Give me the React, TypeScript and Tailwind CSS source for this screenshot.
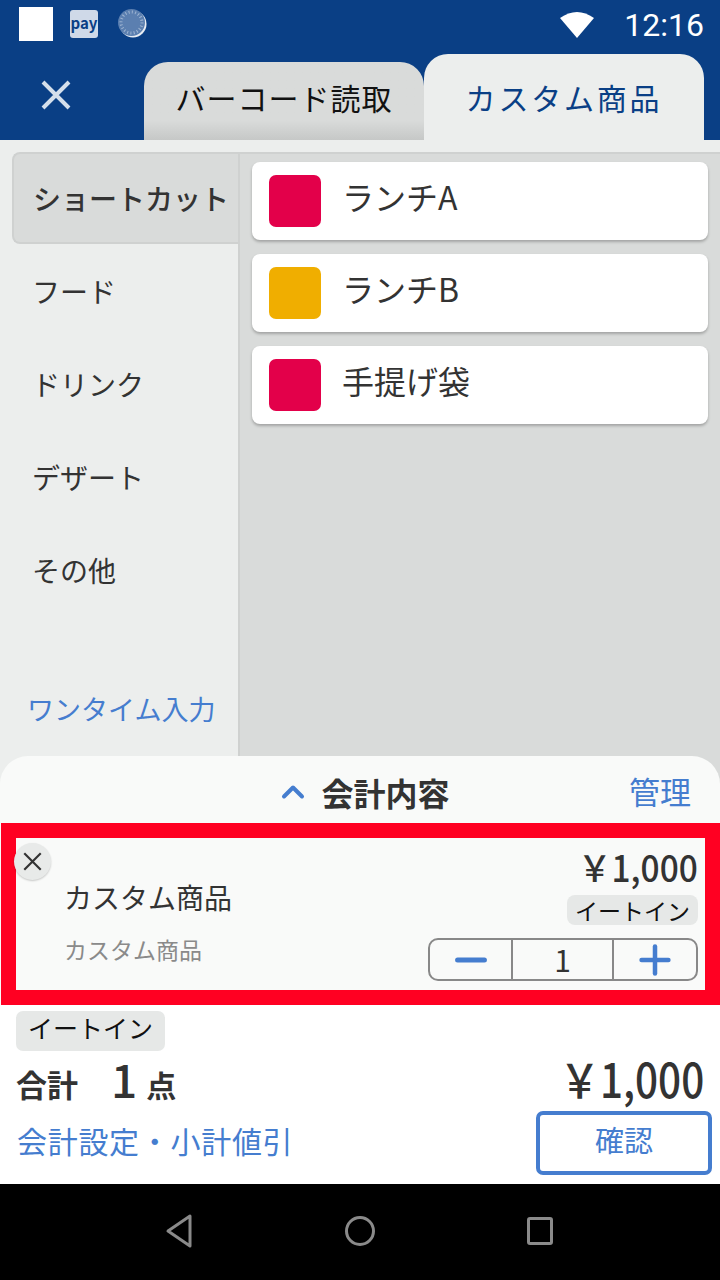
import React from "react";
import { ChevronUp, Minus, Plus } from "lucide-react";

const font = { fontFamily: '"Noto Sans CJK JP", "Noto Sans", sans-serif' };

const categories = ["フード", "ドリンク", "デザート", "その他"];

const shortcuts = [
  { name: "ランチA", color: "bg-[#e3004a]" },
  { name: "ランチB", color: "bg-[#f0ae00]" },
  { name: "手提げ袋", color: "bg-[#e3004a]" },
];

function Cross({ size, width, color }: { size: number; width: number; color: string }) {
  return (
    <svg width={size} height={size} viewBox="0 0 30 30" fill="none" stroke={color} strokeWidth={width}>
      <path d="M2 2 L28 28 M28 2 L2 28" />
    </svg>
  );
}

function StatusBar() {
  return (
    <div className="h-[54px] flex items-center pl-[19px] pr-[16px] text-white">
      <div className="w-[34px] h-[34px] bg-white -mt-[7px]" />
      <div className="ml-[17px] w-[28px] h-[28px] -mt-[7px] rounded-[3px] bg-[#cfd9e8] text-[#0a3f85] text-[15px] font-bold leading-[26px] text-center">
        pay
      </div>
      <svg className="ml-[20px] -mt-[7px]" width="30" height="30" viewBox="0 0 30 30">
        <circle cx="15" cy="15" r="13.5" fill="#fff" opacity="0.9" />
        <circle cx="13.5" cy="13.5" r="13.5" fill="#5b7fb0" />
        <circle cx="13.5" cy="13.5" r="10.5" fill="none" stroke="#9fb5d2" strokeWidth="3" strokeDasharray="1 2.3" />
      </svg>
      <svg className="ml-auto -mt-[4px]" width="36" height="28" viewBox="0 0 36 28">
        <path d="M18 27 L1 7 Q18 -5 35 7 Z" fill="#fff" />
      </svg>
      <span className="ml-[29px] text-[32px] leading-none -mt-[4px]" style={{ fontFamily: "Roboto, sans-serif" }}>
        12:16
      </span>
    </div>
  );
}

function Header() {
  return (
    <div className="h-[86px] flex items-end pr-[16px]">
      <div className="w-[144px] h-full flex items-center pl-[41px] pb-[5px]">
        <Cross size={30} width={4} color="#d5dfeb" />
      </div>
      <div className="w-[280px] h-[78px] rounded-t-[24px] bg-gradient-to-b from-[#d9dbda] from-[75%] to-[#c6c8c7] flex items-center justify-center text-[30px] text-[#111] pb-[8px] tracking-[1px]">
        バーコード読取
      </div>
      <div className="w-[280px] h-[86px] rounded-t-[24px] bg-[#eceeed] flex items-center justify-center text-[30px] text-[#0a3f85] tracking-[2.8px]">
        カスタム商品
      </div>
    </div>
  );
}

function Sidebar() {
  return (
    <div className="w-[238px] bg-[#eceeed] pt-[12px] flex flex-col">
      <div className="ml-[12px] h-[92px] rounded-l-[8px] border-2 border-r-0 border-[#cfd1d0] bg-[#d9dbda] flex items-center pl-[19px] text-[28px] font-medium text-[#333] whitespace-nowrap">
        ショートカット
      </div>
      {categories.map((c) => (
        <div key={c} className="h-[93px] flex items-center pl-[32px] text-[28px] text-[#333]">
          {c}
        </div>
      ))}
      {/* the sheet covers the last 28px of this column */}
      <div className="mt-auto pb-[62px] pl-[27px] text-[27px] text-[#457dcf] leading-none whitespace-nowrap">
        ワンタイム入力
      </div>
    </div>
  );
}

function ShortcutList() {
  return (
    <div className="flex-1 bg-[#d9dbda] border-t-2 border-l-2 border-[#cfd1d0] pt-[8px] pl-[12px] pr-[12px] flex flex-col gap-[14px]">
      {shortcuts.map((s) => (
        <div
          key={s.name}
          className="h-[78px] rounded-[8px] bg-white shadow-[0_2px_3px_rgba(0,0,0,0.25)] flex items-center pl-[17px] text-[32px] text-[#333]"
        >
          <div className={`w-[52px] h-[52px] rounded-[7px] ${s.color}`} />
          <span className="ml-[21px] pb-[10px]">{s.name}</span>
        </div>
      ))}
    </div>
  );
}

function LineItem() {
  return (
    <div className="ml-[1px] border-x-[15px] border-y-[15px] border-[#ff0022] bg-[#f9faf9] h-[182px] relative flex">
      <div className="absolute -left-[2px] top-[5px] w-[37px] h-[37px] rounded-full bg-[#e8eae9] shadow-[0_1px_2px_rgba(0,0,0,0.2)] flex items-center justify-center">
        <Cross size={19} width={3.4} color="#333" />
      </div>
      <div className="pl-[48px] pt-[39px]">
        <div className="text-[28px] leading-[40px] text-[#333]">カスタム商品</div>
        <div className="text-[23px] leading-[32px] mt-[16px] text-[#8a8a8a]">カスタム商品</div>
      </div>
      <div className="ml-auto pr-[7px] pt-[6px] flex flex-col items-end">
        <div className="text-[36px] leading-[44px] font-medium text-[#333] origin-right scale-x-[0.93]">￥1,000</div>
        <div className="mt-[7px] h-[30px] px-[8px] rounded-[8px] bg-[#e6e8e7] text-[23px] leading-[30px] text-[#111]">イートイン</div>
        <div className="mt-[13px] w-[270px] h-[43px] rounded-[10px] border-2 border-[#888] flex items-stretch">
          <div className="w-[81px] flex items-center justify-center text-[#457dcf] overflow-hidden">
            <Minus size={46} strokeWidth={5} absoluteStrokeWidth className="shrink-0" />
          </div>
          <div className="w-[103px] border-x-2 border-[#888] flex items-center justify-center text-[30px] text-[#333]">1</div>
          <div className="flex-1 flex items-center justify-center text-[#457dcf] overflow-hidden">
            <Plus size={46} strokeWidth={4.5} absoluteStrokeWidth className="shrink-0" />
          </div>
        </div>
      </div>
    </div>
  );
}

function Summary() {
  return (
    <div className="bg-white flex-1 px-[16px] pt-[6px] pb-[8px] flex flex-col">
      <div className="w-[149px] h-[40px] rounded-[7px] bg-[#e6e8e7] text-[25px] leading-[32px] text-[#111] text-center">イートイン</div>
      <div className="flex items-end justify-between h-[50px] text-[#333]">
        <div className="flex items-end font-bold leading-none">
          <span className="text-[31px] mb-[2px]">合計</span>
          <span className="text-[46px] ml-[33px] font-medium">1</span>
          <span className="text-[30px] ml-[9px] mb-[2px]">点</span>
        </div>
        <span className="text-[47px] leading-none font-medium origin-right scale-x-[0.86]">￥1,000</span>
      </div>
      <div className="flex items-center justify-between mt-[10px]">
        <span className="text-[30px] text-[#457dcf] tracking-[0.7px] ml-[1px] -mt-[6px]">会計設定・小計値引</span>
        <div className="w-[176px] h-[64px] -mr-[8px] pb-[6px] rounded-[7px] border-[4px] border-[#457dcf] text-[#457dcf] text-[29px] flex items-center justify-center">
          確認
        </div>
      </div>
    </div>
  );
}

function NavBar() {
  return (
    <div className="h-[96px] bg-black flex items-center justify-center gap-[150px] pb-[2px]">
      <svg width="30" height="36" viewBox="0 0 30 36" fill="none" stroke="#8a8a8a" strokeWidth="3" strokeLinejoin="round">
        <path d="M25 3 V33 L3 18 Z" />
      </svg>
      <svg width="30" height="36" viewBox="0 0 30 36" fill="none" stroke="#8a8a8a" strokeWidth="3">
        <circle cx="15" cy="18" r="13.5" />
      </svg>
      <svg width="30" height="36" viewBox="0 0 30 36" fill="none" stroke="#8a8a8a" strokeWidth="3" strokeLinejoin="round">
        <rect x="3.5" y="5.5" width="23" height="25" rx="1.5" />
      </svg>
    </div>
  );
}

export default function App() {
  return (
    <div className="w-[720px] h-[1280px] flex flex-col bg-[#0a3f85] overflow-hidden" style={font}>
      <StatusBar />
      <Header />
      <div className="flex h-[644px] -mb-[28px] shrink-0">
        <Sidebar />
        <div className="flex-1 flex flex-col pt-[12px] bg-[#eceeed]">
          <ShortcutList />
        </div>
      </div>
      <div className="relative flex-1 flex flex-col bg-[#f9faf9] rounded-t-[28px]">
        <div className="h-[67px] relative flex items-center justify-center shrink-0 pt-[4px] pl-[9px]">
          <ChevronUp size={36} strokeWidth={4} absoluteStrokeWidth className="text-[#457dcf] -ml-[4px] mr-[10px]" />
          <span className="text-[32px] font-bold text-[#333]">会計内容</span>
          <span className="absolute right-[29px] text-[31px] text-[#457dcf]">管理</span>
        </div>
        <LineItem />
        <Summary />
      </div>
      <NavBar />
    </div>
  );
}
